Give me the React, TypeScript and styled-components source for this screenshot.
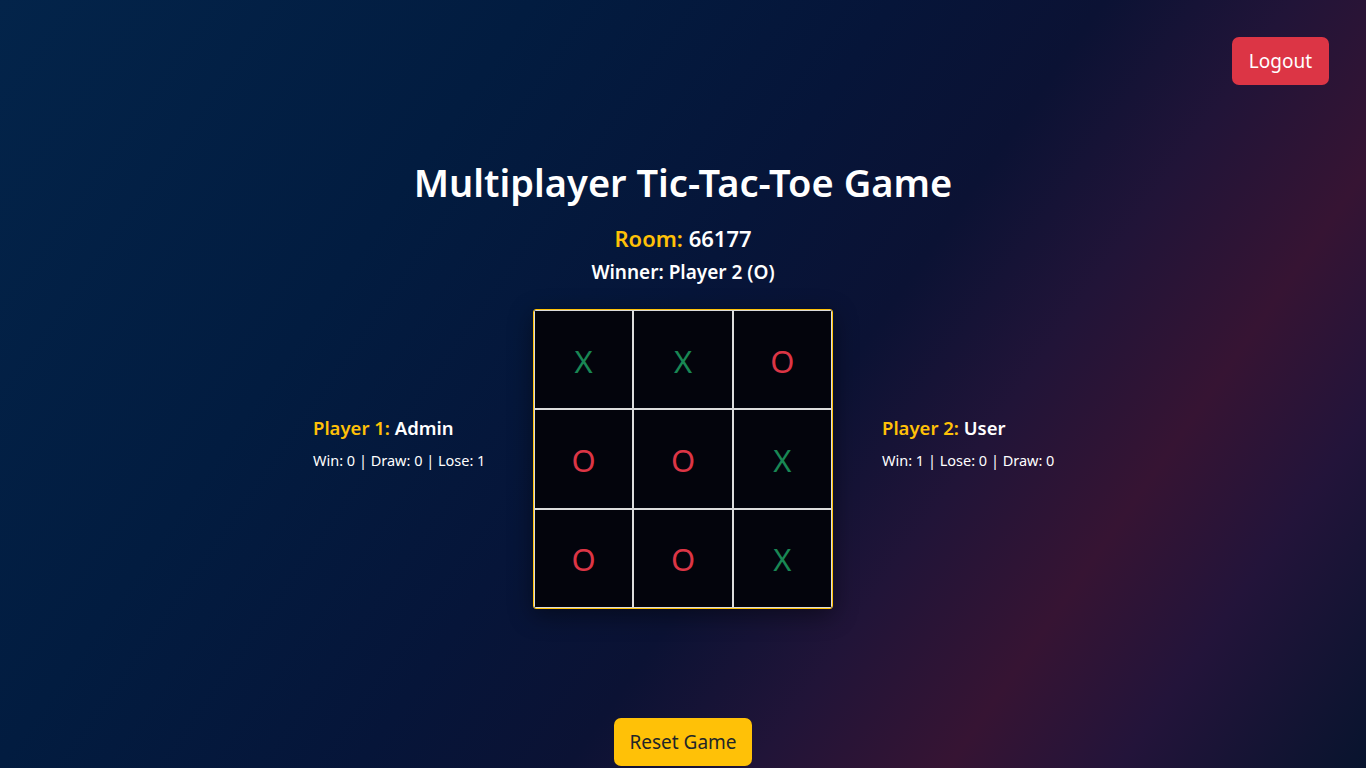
import React from "react";
import styled, { createGlobalStyle } from "styled-components";

const GlobalStyle = createGlobalStyle`
  html, body { margin: 0; padding: 0; }
  body {
    font-family: "Noto Sans", "Open Sans", sans-serif;
    color: #fff;
    min-height: 100vh;
    background: linear-gradient(125deg,
      #03244a 0%,
      #021c40 28%,
      #061539 47%,
      #0b1234 58%,
      #211438 68%,
      #361433 78%,
      #23143a 87%,
      #08142e 100%);
    background-attachment: fixed;
    overflow: hidden;
  }
  * { box-sizing: border-box; }
`;

const Page = styled.div`
  min-height: 100vh;
  display: flex;
  flex-direction: column;
`;

const TopBar = styled.header`
  display: flex;
  justify-content: flex-end;
  padding: 37px 37px 0;
`;

const Button = styled.button<{ $variant: "danger" | "warning" }>`
  font-family: inherit;
  font-size: 19px;
  line-height: 24px;
  height: 48px;
  padding: 0 ${(p) => (p.$variant === "danger" ? "17px" : "15px")};
  border: none;
  border-radius: 7px;
  cursor: pointer;
  background: ${(p) => (p.$variant === "danger" ? "#dc3545" : "#ffc107")};
  color: ${(p) => (p.$variant === "danger" ? "#fff" : "#212529")};
`;

const Main = styled.main`
  display: flex;
  flex-direction: column;
  align-items: center;
`;

const Title = styled.h1`
  margin: 73px 0 0;
  font-size: 38px;
  line-height: 48px;
  font-weight: 600;
`;

const RoomLine = styled.h3`
  margin: 17px 0 0;
  font-size: 22px;
  line-height: 30px;
  font-weight: 600;
`;

const Accent = styled.span`
  color: #ffc107;
`;

const WinnerLine = styled.h5`
  margin: 7px 0 0;
  font-size: 19px;
  line-height: 24px;
  font-weight: 600;
`;

const GameRow = styled.section`
  margin-top: 25px;
  display: flex;
  align-items: center;
  justify-content: center;
  gap: 49px;
`;

const PlayerCard = styled.div`
  width: 171px;
  white-space: nowrap;
  padding-bottom: 30px;
`;

const PlayerName = styled.h4`
  margin: 0 0 8px;
  font-size: 18.5px;
  line-height: 24px;
  font-weight: 600;
`;

const PlayerStats = styled.p`
  margin: 0;
  font-size: 14.5px;
  line-height: 24px;
`;

const Board = styled.div`
  width: 300px;
  height: 300px;
  display: grid;
  grid-template-columns: repeat(3, 1fr);
  grid-template-rows: repeat(3, 1fr);
  border: 1px solid #ffc107;
  border-radius: 3px;
  box-shadow: 0 6px 24px rgba(0, 0, 0, 0.45);
  overflow: hidden;
`;

const Cell = styled.div<{ $mark: "X" | "O" | "" }>`
  display: flex;
  align-items: center;
  justify-content: center;
  padding-top: 3px;
  background: #03040c;
  border: 1px solid #dcdcdc;
  font-size: 31px;
  line-height: 1;
  color: ${(p) => (p.$mark === "X" ? "#198754" : "#dc3545")};
`;

const Footer = styled.div`
  margin-top: 109px;
`;

const board: ("X" | "O" | "")[] = ["X", "X", "O", "O", "O", "X", "O", "O", "X"];

export default function App() {
  return (
    <Page>
      <GlobalStyle />
      <TopBar>
        <Button $variant="danger">Logout</Button>
      </TopBar>
      <Main>
        <Title>Multiplayer Tic-Tac-Toe Game</Title>
        <RoomLine>
          <Accent>Room:</Accent> 66177
        </RoomLine>
        <WinnerLine>Winner: Player 2 (O)</WinnerLine>
        <GameRow>
          <PlayerCard>
            <PlayerName>
              <Accent>Player 1:</Accent> Admin
            </PlayerName>
            <PlayerStats>Win: 0 | Draw: 0 | Lose: 1</PlayerStats>
          </PlayerCard>
          <Board>
            {board.map((m, i) => (
              <Cell key={i} $mark={m}>
                {m}
              </Cell>
            ))}
          </Board>
          <PlayerCard>
            <PlayerName>
              <Accent>Player 2:</Accent> User
            </PlayerName>
            <PlayerStats>Win: 1 | Lose: 0 | Draw: 0</PlayerStats>
          </PlayerCard>
        </GameRow>
        <Footer>
          <Button $variant="warning">Reset Game</Button>
        </Footer>
      </Main>
    </Page>
  );
}
